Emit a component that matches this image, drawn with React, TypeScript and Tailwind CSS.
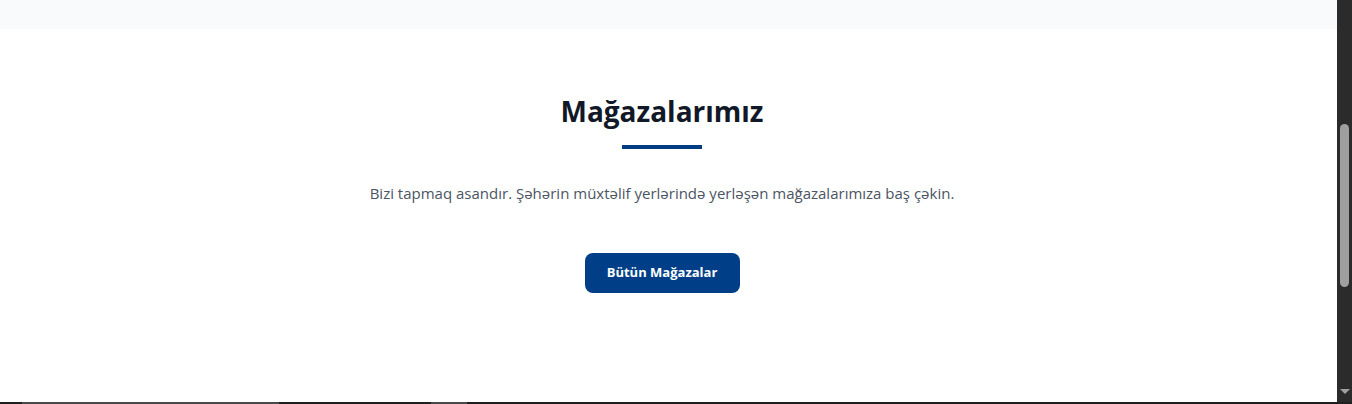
import React from "react";

export default function App() {
  return (
    <div className="flex flex-col w-[1352px] h-[404px] overflow-hidden bg-white" style={{ fontFamily: '"Open Sans", "Noto Sans", sans-serif' }}>
      <div className="flex flex-1 min-h-0">
        <div className="flex-1 flex flex-col">
          <div className="h-[29px] bg-[#f9fafb]" />
          <section className="flex flex-col items-center pt-16 pr-[13px]">
            <h2 className="text-[28px] leading-[36px] font-bold text-[#111827]">Mağazalarımız</h2>
            <div className="mt-4 h-1 w-20 bg-[#003d82]" />
            <p className="mt-8 text-[15px] leading-6 text-[#4b5563]">
              Bizi tapmaq asandır. Şəhərin müxtəlif yerlərində yerləşən mağazalarımıza baş çəkin.
            </p>
            <button className="mt-12 h-10 w-[155px] rounded-lg bg-[#003f87] text-[13px] font-bold text-white">
              Bütün Mağazalar
            </button>
          </section>
        </div>
        <div className="w-[15px] bg-[#2b2b2b] flex flex-col items-center pt-[124px]">
          <div className="w-[9px] h-[163px] rounded-full bg-[#9f9f9f]" />
          <div className="flex-1" />
          <div className="mb-[8px] w-0 h-0 border-l-[5px] border-r-[5px] border-t-[5px] border-l-transparent border-r-transparent border-t-[#a0a0a0]" />
        </div>
      </div>
      <div className="h-[2px] flex bg-[#1f1f1f]">
        <div className="w-[22px]" />
        <div className="w-[257px] bg-[#4a4a4a]" />
        <div className="w-[152px]" />
        <div className="w-[36px] bg-[#4a4a4a]" />
      </div>
    </div>
  );
}
